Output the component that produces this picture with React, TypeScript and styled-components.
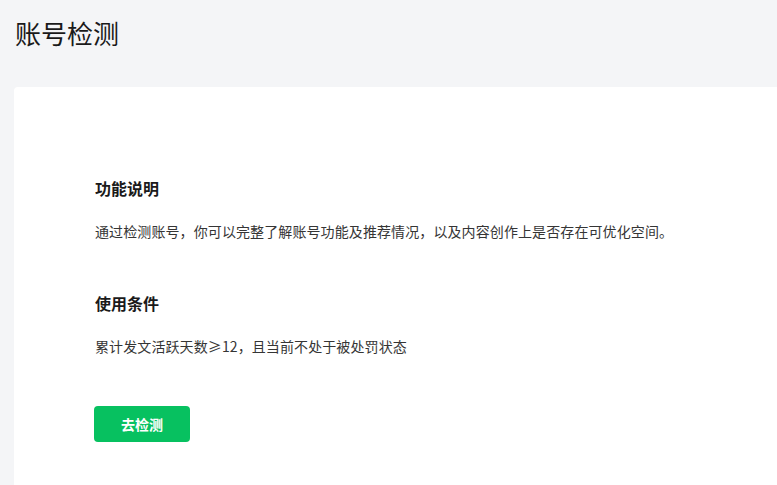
import styled, {createGlobalStyle} from "styled-components";

const GlobalStyle = createGlobalStyle`
    html, body {
        margin: 0;
        padding: 0;
        background: #f4f5f7;
        font-family: "Noto Sans CJK SC", "Noto Sans", sans-serif;
    }
`

const StyledPage = styled.div`
    display: flex;
    flex-direction: column;
    padding: 15px 0 0 14px;
    height: 100vh;
    box-sizing: border-box;
    overflow: hidden;
`

const StyledTitle = styled.h1`
    margin: 0 0 36px 1px;
    font-size: 26px;
    line-height: 36px;
    font-weight: 400;
    color: #1a1a1a;
`

const StyledCard = styled.div`
    flex: 1;
    background: #fff;
    border-radius: 4px 0 0 0;
    padding: 89px 0 0 81px;
`

const StyledSection = styled.section`
    & + & {
        margin-top: 49px;
    }
`

const StyledHeading = styled.h2`
    margin: 0 0 20px;
    font-size: 16px;
    line-height: 24px;
    font-weight: 700;
    color: #1a1a1a;
`

const StyledText = styled.p`
    margin: 0;
    font-size: 14px;
    line-height: 22px;
    color: #353535;
    letter-spacing: 0.1px;
`

const StyledButton = styled.button`
    margin: 49px 0 0 -1px;
    width: 96px;
    height: 36px;
    border: none;
    border-radius: 4px;
    background: #07c160;
    color: #fff;
    font-family: inherit;
    font-size: 14px;
    font-weight: 700;
    cursor: pointer;
`

const sections = [
  {title: '功能说明', text: '通过检测账号，你可以完整了解账号功能及推荐情况，以及内容创作上是否存在可优化空间。'},
  {title: '使用条件', text: '累计发文活跃天数≥12，且当前不处于被处罚状态'},
]

const App = () => {
  return (
    <StyledPage>
      <GlobalStyle/>
      <StyledTitle>账号检测</StyledTitle>
      <StyledCard>
        {sections.map((s) =>
          <StyledSection key={s.title}>
            <StyledHeading>{s.title}</StyledHeading>
            <StyledText>{s.text}</StyledText>
          </StyledSection>
        )}
        <StyledButton>去检测</StyledButton>
      </StyledCard>
    </StyledPage>
  );
};

export default App;
